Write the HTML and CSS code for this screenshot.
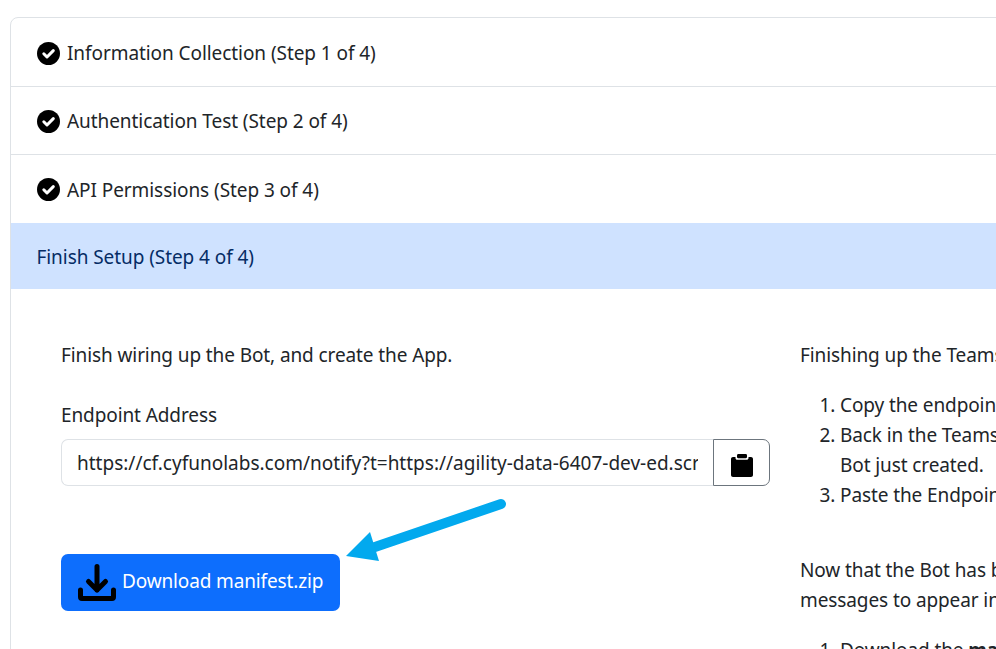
FILE: index.html
```html
<!DOCTYPE html>
<html lang="en">
<head>
<meta charset="utf-8">
<title>Finish Setup</title>
<link rel="stylesheet" href="styles.css">
</head>
<body>
<div class="accordion">
  <div class="step">
    <svg class="check" viewBox="0 0 23 23"><circle cx="11.500" cy="11.500" r="11.500"/><path class="tick" d="M6.800 11.800 10 15 16.300 8.600"/></svg>
    <span>Information Collection (Step 1 of 4)</span>
  </div>
  <div class="step second">
    <svg class="check" viewBox="0 0 23 23"><circle cx="11.500" cy="11.500" r="11.500"/><path class="tick" d="M6.800 11.800 10 15 16.300 8.600"/></svg>
    <span>Authentication Test (Step 2 of 4)</span>
  </div>
  <div class="step before-active">
    <svg class="check" viewBox="0 0 23 23"><circle cx="11.500" cy="11.500" r="11.500"/><path class="tick" d="M6.800 11.800 10 15 16.300 8.600"/></svg>
    <span>API Permissions (Step 3 of 4)</span>
  </div>
  <div class="step active"><span>Finish Setup (Step 4 of 4)</span></div>
  <div class="panel">
    <section class="col">
      <p class="intro">Finish wiring up the Bot, and create the App.</p>
      <label class="label" for="endpoint">Endpoint Address</label>
      <div class="input-group">
        <input id="endpoint" class="field" type="text" readonly value="https://cf.cyfunolabs.com/notify?t=https://agility-data-6407-dev-ed.scrm.example.com/services/notify">
        <button class="copy" type="button" aria-label="Copy">
          <svg viewBox="0 0 24 24" width="24" height="24"><path d="M5.500 4H3C1.900 4 1 4.900 1 6V22c0 1.100.9 2 2 2H21c1.100 0 2-.9 2-2V6c0-1.100-.9-2-2-2H18.500V5c0 1-.8 1.800-1.800 1.800H7.300C6.300 6.800 5.500 6 5.500 5z"/><path d="M8.500 1H15.500C16.500 1 17 1.500 17 2.500V4C17 4.700 16.500 5.200 15.800 5.200H8.200C7.500 5.200 7 4.700 7 4V2.500C7 1.500 7.500 1 8.500 1z"/></svg>
        </button>
      </div>
      <button class="download" type="button">
        <svg viewBox="0 0 38 38" width="38" height="38"><path d="M19 2.500V26M10.500 17.500 19 26l8.500-8.500M2.500 26v7c0 1 .5 1.500 1.500 1.500h30c1 0 1.500-.5 1.500-1.500V26" fill="none" stroke="#000" stroke-width="5" stroke-linecap="round" stroke-linejoin="round"/></svg>
        <span>Download manifest.zip</span>
      </button>
    </section>
    <section class="col">
      <p>Finishing up the Teams App configuration</p>
      <ol>
        <li>Copy the endpoint address from this page.</li>
        <li>Back in the Teams Developer Portal, open the<br>Bot just created.</li>
        <li>Paste the Endpoint Address into the form.</li>
      </ol>
      <p class="after">Now that the Bot has been configured, allow for<br>messages to appear in the channel you selected.</p>
      <ol>
        <li>Download the <b>manifest.zip</b> file.</li>
      </ol>
    </section>
  </div>
</div>
<svg class="arrow" viewBox="0 0 996 649" width="996" height="649" aria-hidden="true">
  <path d="M501 504 372 548" stroke="#02a9ee" stroke-width="10" stroke-linecap="round" fill="none"/>
  <path d="M346 556 370 532 379 561z" fill="#02a9ee"/>
</svg>
</body>
</html>
```

FILE: styles.css
```css
html, body {
  margin: 0;
  height: 649px;
  overflow: hidden;
  background: #fff;
}
body {
  position: relative;
  padding: 17px 0 0 10px;
  box-sizing: border-box;
  font-family: "Noto Sans", "Open Sans", sans-serif;
  font-size: 19px;
  line-height: 30px;
  letter-spacing: -0.1px;
  color: #212529;
}
.accordion {
  width: 1500px;
  border: 1px solid #dee2e6;
  border-radius: 8px;
}
.step {
  display: flex;
  align-items: center;
  gap: 7px;
  height: 68px;
  padding: 2px 25px 0 26px;
  border-bottom: 1px solid #dee2e6;
  box-sizing: border-box;
  letter-spacing: -0.07px;
}
.step:first-child { height: 69px; }
.second { padding-top: 1px; }
.before-active { border-bottom-color: transparent; }
.check {
  width: 23px;
  height: 23px;
  flex: none;
  fill: #000;
}
.tick {
  fill: none;
  stroke: #fff;
  stroke-width: 3;
  stroke-linecap: round;
  stroke-linejoin: round;
}
.active {
  height: 66px;
  padding-left: 25.5px;
  background: #cfe2ff;
  color: #052c65;
  border-bottom: 0;
}
.panel {
  display: grid;
  grid-template-columns: 709px 709px;
  column-gap: 30px;
  padding: 51px 50px 40px;
}
.col { min-width: 0; }
p { margin: 0 0 20px; }
.intro { margin-bottom: 30px; }
.label { display: block; margin-bottom: 9px; }
.input-group { display: flex; height: 47px; }
.field {
  flex: 1;
  min-width: 0;
  padding: 0 15px;
  font: inherit;
  letter-spacing: 0;
  color: #212529;
  background: #fff;
  border: 1px solid #dee2e6;
  border-right: 0;
  border-radius: 7px 0 0 7px;
  outline: none;
}
.copy {
  display: flex;
  align-items: center;
  justify-content: center;
  width: 57px;
  padding: 5px 0 0;
  background: #fff;
  border: 1px solid #6c757d;
  border-radius: 0 7px 7px 0;
}
.download {
  display: flex;
  align-items: center;
  gap: 6px;
  width: 279px;
  height: 57px;
  margin-top: 68px;
  padding: 0 0 0 17px;
  font: inherit;
  letter-spacing: -0.14px;
  color: #fff;
  background: #0d6efd;
  border: 0;
  border-radius: 7px;
}
.download span { padding-bottom: 3px; }
ol { margin: 0 0 45px; padding-left: 40px; }
.after { margin-bottom: 20px; }
.arrow {
  position: absolute;
  top: 0;
  left: 0;
  pointer-events: none;
}
```
